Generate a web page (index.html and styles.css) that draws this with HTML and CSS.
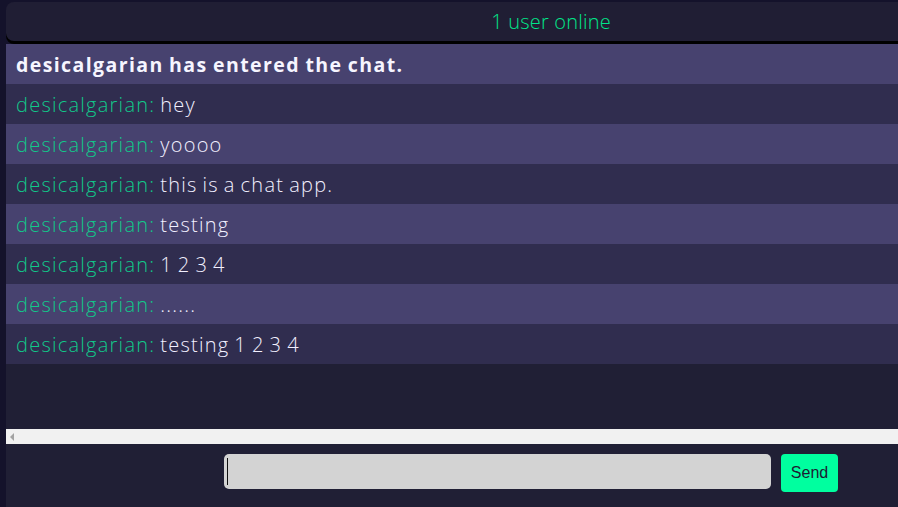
FILE: index.html
```html
<!DOCTYPE html>
<html>
<head>
<meta charset="utf-8">
<link rel="stylesheet" href="styles.css">
</head>
<body>
<div class="app">
  <header class="header">1 user online</header>
  <div class="messages">
    <div class="msg system">desicalgarian has entered the chat.</div>
    <div class="msg"><span class="name">desicalgarian:</span> hey</div>
    <div class="msg"><span class="name">desicalgarian:</span> yoooo</div>
    <div class="msg"><span class="name">desicalgarian:</span> this is a chat app.</div>
    <div class="msg"><span class="name">desicalgarian:</span> testing</div>
    <div class="msg"><span class="name">desicalgarian:</span> 1 2 3 4</div>
    <div class="msg"><span class="name">desicalgarian:</span> ......</div>
    <div class="msg"><span class="name">desicalgarian:</span> testing 1 2 3 4</div>
  </div>
  <div class="hscroll"><span class="arrow"></span></div>
  <div class="composer">
    <div class="field"><span class="caret"></span></div>
    <button class="send">Send</button>
  </div>
</div>
</body>
</html>
```
FILE: styles.css
```css
html, body {
  margin: 0;
  padding: 0;
  background: #14122b;
  overflow: hidden;
  width: 898px;
  height: 507px;
}
body {
  padding: 2px 0 0 6px;
  box-sizing: border-box;
  font-family: "Open Sans", "Lato", sans-serif;
}
.app {
  width: 1090px;
  display: flex;
  flex-direction: column;
}
.header {
  height: 39px;
  background: #201e34;
  border-radius: 8px;
  box-shadow: 0 3px 0 #000;
  color: #00e68a;
  font-size: 20px;
  font-weight: 300;
  letter-spacing: 0.2px;
  display: flex;
  align-items: center;
  justify-content: center;
  margin-bottom: 3px;
}
.messages {
  height: 385px;
  background: #201f35;
  display: flex;
  flex-direction: column;
}
.msg {
  height: 40px;
  display: flex;
  align-items: center;
  padding-left: 10px;
  font-size: 20px;
  font-weight: 300;
  letter-spacing: 1.25px;
  word-spacing: -1.5px;
  color: #f2f0ff;
  white-space: pre;
  background: #302d4f;
}
.msg:nth-child(odd) {
  background: #47426f;
}
.msg.system {
  font-weight: 700;
  font-size: 19.5px;
  letter-spacing: 1.4px;
  word-spacing: -1px;
  color: #f6f5ff;
}
.name {
  color: #10c98a;
}
.hscroll {
  height: 15px;
  background: #f1f1f1;
  display: flex;
  align-items: center;
  padding-left: 4px;
}
.arrow {
  width: 0;
  height: 0;
  border-top: 4px solid transparent;
  border-bottom: 4px solid transparent;
  border-right: 4px solid #a3a3a3;
}
.composer {
  height: 70px;
  background: #201f35;
  display: flex;
  align-items: flex-start;
  padding: 10px 0 0 218px;
  box-sizing: border-box;
  gap: 10px;
}
.field {
  width: 547px;
  height: 35px;
  background: #d3d3d3;
  border-radius: 5px;
  display: flex;
  align-items: center;
  padding-left: 3px;
  box-sizing: border-box;
}
.caret {
  width: 1px;
  height: 27px;
  background: #111;
}
.send {
  width: 57px;
  height: 38px;
  border: none;
  border-radius: 4px;
  background: #00ff9f;
  color: #1d1b33;
  font-family: "Liberation Sans", Arial, sans-serif;
  font-size: 16px;
  padding: 0;
}
```
